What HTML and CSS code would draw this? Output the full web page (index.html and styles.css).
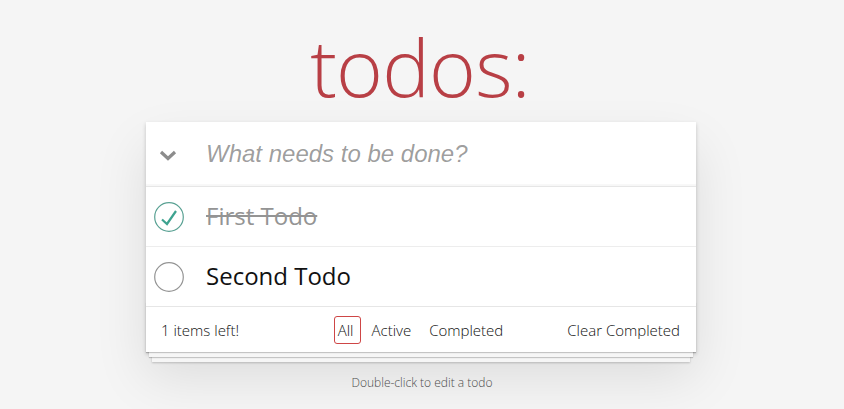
FILE: index.html
```html
<!DOCTYPE html>
<html lang="en">
<head>
<meta charset="utf-8">
<title>todos</title>
<link rel="stylesheet" href="styles.css">
</head>
<body>
<div class="page">
  <h1 class="title">todos:</h1>
  <section class="todoapp">
    <header class="header">
      <span class="toggle-all">
        <svg width="18" height="11" viewBox="0 0 18 11"><polyline points="2,2 9,8.5 16,2" fill="none" stroke="#8c8c8c" stroke-width="3.2" stroke-linecap="butt" stroke-linejoin="miter"/></svg>
      </span>
      <input class="new-todo" placeholder="What needs to be done?">
    </header>
    <ul class="todo-list">
      <li class="todo completed">
        <span class="toggle">
          <svg width="30" height="30" viewBox="0 0 30 30"><circle cx="15" cy="15" r="14.3" fill="none" stroke="#59a193" stroke-width="1.2"/><polyline points="8,17.5 13,22 22,9" fill="none" stroke="#3ea390" stroke-width="2.2"/></svg>
        </span>
        <label class="todo-label">First Todo</label>
      </li>
      <li class="todo">
        <span class="toggle">
          <svg width="30" height="30" viewBox="0 0 30 30"><circle cx="15" cy="15" r="14.3" fill="none" stroke="#949494" stroke-width="1.2"/></svg>
        </span>
        <label class="todo-label">Second Todo</label>
      </li>
    </ul>
    <footer class="footer">
      <span class="todo-count">1 items left!</span>
      <ul class="filters">
        <li><a class="filter selected">All</a></li>
        <li><a class="filter">Active</a></li>
        <li><a class="filter">Completed</a></li>
      </ul>
      <button class="clear-completed">Clear Completed</button>
    </footer>
  </section>
  <p class="info">Double-click to edit a todo</p>
</div>
</body>
</html>
```

FILE: styles.css
```css
html, body {
  margin: 0;
  padding: 0;
}
body {
  background: #f5f5f5;
  color: #111;
  font-family: "Open Sans", "Liberation Sans", sans-serif;
  font-size: 14px;
  font-weight: 300;
}
.page {
  width: 552px;
  margin: 0 auto;
  padding-bottom: 19px;
}
.title {
  margin: 0;
  padding-top: 26px;
  padding-right: 4px;
  margin-bottom: 16px;
  font-size: 80px;
  line-height: 80px;
  font-weight: 200;
  text-align: center;
  color: #b83f45;
  letter-spacing: -0.8px;
}
.todoapp {
  background: #fff;
  width: 550px;
  box-shadow: 0 2px 4px 0 rgba(0,0,0,0.2), 0 25px 50px 0 rgba(0,0,0,0.1);
}
.header {
  display: grid;
  grid-template-columns: 60px 1fr;
  align-items: center;
  height: 64px;
  box-shadow: inset 0 -2px 1px rgba(0,0,0,0.03);
}
.toggle-all {
  display: flex;
  margin-left: 13px;
  padding-top: 2px;
}
.new-todo {
  border: none;
  outline: none;
  background: transparent;
  padding: 0;
  margin: 0;
  font-size: 24px;
  font-family: "Liberation Sans", Arial, sans-serif;
  color: #111;
}
.new-todo::placeholder {
  font-style: italic;
  font-weight: 400;
  color: rgba(0,0,0,0.4);
}
.todo-list {
  list-style: none;
  margin: 0;
  padding: 0;
  border-top: 1px solid #e6e6e6;
}
.todo {
  display: grid;
  grid-template-columns: 60px 1fr;
  align-items: center;
  height: 59px;
  border-bottom: 1px solid #ededed;
  font-size: 24px;
}
.todo:last-child {
  border-bottom: none;
}
.toggle {
  display: flex;
  margin-left: 8px;
}
.todo-label {
  font-weight: 400;
  color: #111;
  line-height: 1.2;
}
.todo.completed .todo-label {
  color: #949494;
  text-decoration: line-through;
}
.footer {
  position: relative;
  display: grid;
  grid-template-columns: 1fr auto 1fr;
  align-items: center;
  height: 45px;
  padding: 0 16px 0 15px;
  border-top: 1px solid #e6e6e6;
  font-size: 15px;
}
.footer::before {
  content: "";
  position: absolute;
  right: 0;
  bottom: 0;
  left: 0;
  height: 50px;
  overflow: hidden;
  pointer-events: none;
  box-shadow: 0 1px 1px rgba(0,0,0,0.2),
              0 8px 0 -3px #f6f6f6,
              0 9px 1px -3px rgba(0,0,0,0.2),
              0 16px 0 -6px #f6f6f6,
              0 17px 2px -6px rgba(0,0,0,0.2);
}
.todo-count {
  justify-self: start;
  color: #111;
}
.filters {
  list-style: none;
  margin: 0 0 0 3px;
  padding: 0;
  display: flex;
  gap: 4px;
}
.filter {
  display: block;
  padding: 3px 6px 3px 3px;
  line-height: 20px;
  border: 1px solid transparent;
  border-radius: 3px;
  color: #111;
}
.filters li + li .filter {
  padding: 3px 6px;
}
.filter.selected {
  border-color: #ce4646;
}
.clear-completed {
  justify-self: end;
  border: none;
  background: none;
  padding: 0;
  margin: 0;
  font: inherit;
  color: #111;
}
.info {
  margin: 23px 0 0;
  text-align: center;
  font-size: 12px;
  line-height: 15px;
  color: #4d4d4d;
  font-weight: 300;
}
```
